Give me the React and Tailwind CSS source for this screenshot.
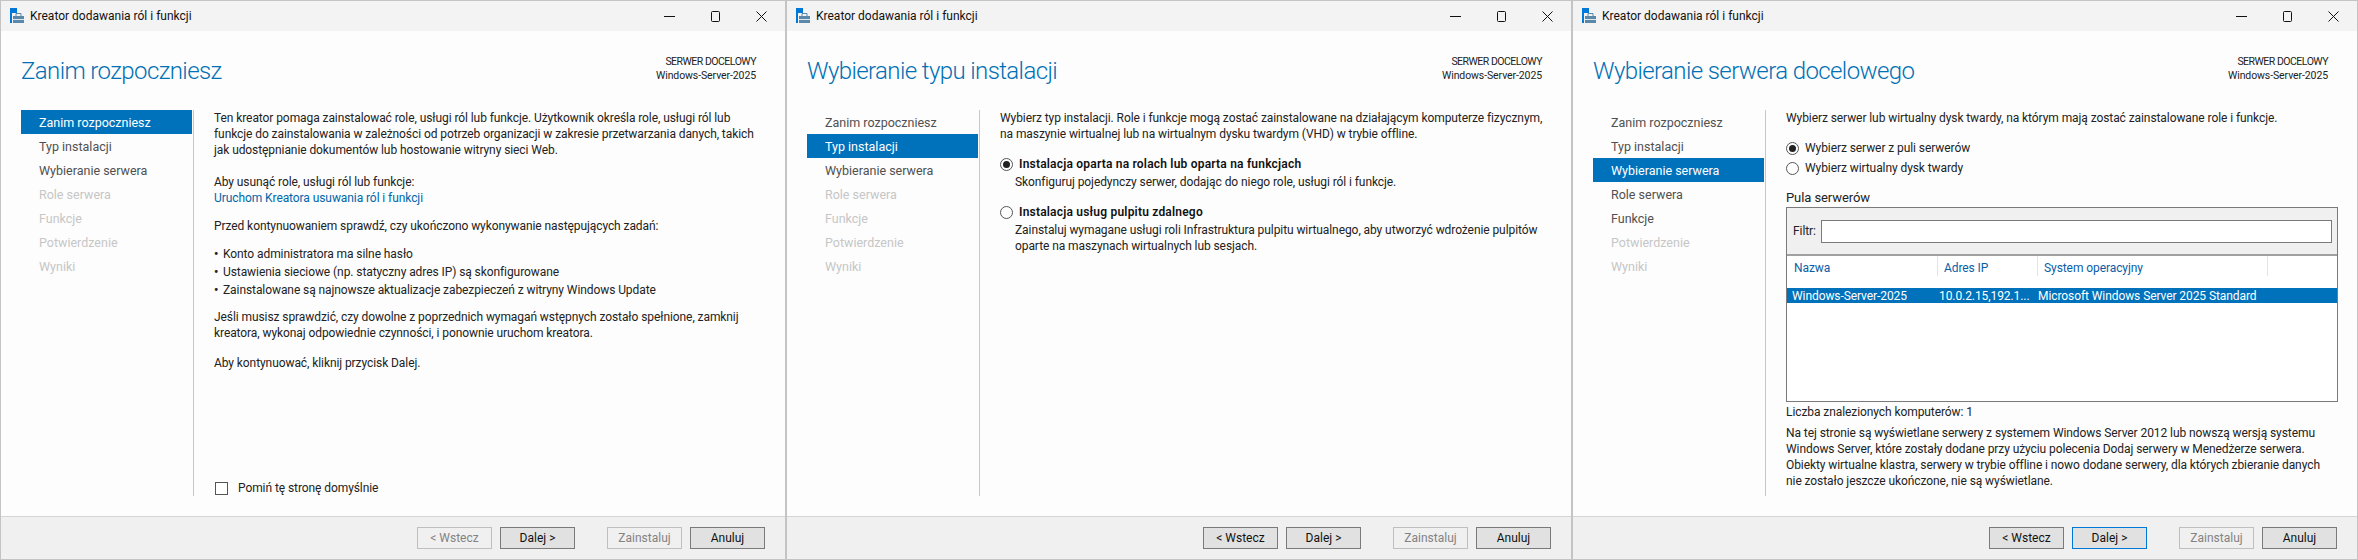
const navItems = ["Zanim rozpoczniesz", "Typ instalacji", "Wybieranie serwera", "Role serwera", "Funkcje", "Potwierdzenie", "Wyniki"]

const font = { fontFamily: "Roboto, 'Noto Sans', sans-serif" }

const AppIcon = () => (
  <svg width="15" height="16" viewBox="0 0 15 16" className="shrink-0">
    <rect x="0" y="0" width="7" height="5" fill="#0078d7" />
    <rect x="0" y="5" width="2" height="10" fill="#0078d7" />
    <path d="M6 8V5.5h5V8" fill="none" stroke="#5b87a8" strokeWidth="1" />
    <rect x="3" y="8" width="11" height="7" fill="#5b87a8" />
    <rect x="3" y="11" width="11" height="1" fill="#dce6ee" />
  </svg>
)

const WindowButtons = () => (
  <div className="flex items-center gap-[35px] mr-[18px]">
    <svg width="11" height="11" viewBox="0 0 11 11"><path d="M0 5.5h11" stroke="#111" /></svg>
    <svg width="11" height="11" viewBox="0 0 11 11"><rect x="1.5" y="0.5" width="8" height="10" rx="1" fill="none" stroke="#111" /></svg>
    <svg width="11" height="11" viewBox="0 0 11 11"><path d="M0.5 0.5l10 10M10.5 0.5l-10 10" stroke="#111" /></svg>
  </div>
)

const Radio = ({ checked }) => (
  <span className="w-[13px] h-[13px] rounded-full border border-[#555] bg-white flex items-center justify-center shrink-0">
    {checked && <span className="w-[7px] h-[7px] rounded-full bg-[#222]" />}
  </span>
)

const Btn = ({ children, disabled, focus }) => (
  <button
    className={`w-[75px] h-[22px] border text-[12px] leading-none ${
      disabled
        ? "bg-[#f0f0f0] border-[#bfbfbf] text-[#838383]"
        : focus
        ? "bg-[#e1e1e1] border-[#0078d7] text-[#111]"
        : "bg-[#e1e1e1] border-[#7a7a7a] text-[#111]"
    }`}
  >
    {children}
  </button>
)

const Wizard = ({ title, active, enabled, backOn, nextFocus, children }) => (
  <div className="w-[786px] h-[560px] shrink-0 flex flex-col border border-[#c4c4c4] bg-[#fdfdfd]" style={font}>
    <div className="h-[30px] bg-[#f3f3f3] flex items-center justify-between pl-[9px] shrink-0">
      <div className="flex items-center gap-[5px] text-[12px] text-[#111]">
        <AppIcon />
        <span>Kreator dodawania ról i funkcji</span>
      </div>
      <WindowButtons />
    </div>

    <div className="h-[79px] flex justify-between pl-[20px] pr-[29px] shrink-0">
      <h1 className="text-[24px] leading-[34px] font-light tracking-[-0.6px] text-[#0070b5] mt-[23px]">{title}</h1>
      <div className="text-right text-[10.5px] leading-[14px] text-[#222] mt-[24px]">
        <div className="tracking-[-0.5px]">SERWER DOCELOWY</div>
        <div className="tracking-[-0.1px]">Windows-Server-2025</div>
      </div>
    </div>

    <div className="h-[386px] flex text-[12px] leading-[16px] text-[#222] shrink-0">
      <div className="ml-[20px] w-[173px] border-r border-[#c8c8c8] shrink-0">
        {navItems.map((item, i) => (
          <div
            key={item}
            className={`w-[171px] h-[24px] pl-[18px] pt-[1px] text-[12.5px] flex items-center ${
              i === active ? "bg-[#0072bc] text-white" : i < enabled ? "text-[#505050]" : "text-[#c6c6c6]"
            }`}
          >
            {item}
          </div>
        ))}
      </div>
      <div className="flex-1 pl-[20px] pr-[19px] tracking-[-0.08px] relative">{children}</div>
    </div>

    <div className="flex-1" />

    <div className="h-[43px] bg-[#f0f0f0] border-t border-[#d5d5d5] flex items-center justify-end pr-[20px] shrink-0">
      <div className="flex gap-[8px]">
        <Btn disabled={!backOn}>&lt; Wstecz</Btn>
        <Btn focus={nextFocus}>Dalej &gt;</Btn>
      </div>
      <div className="flex gap-[8px] ml-[32px]">
        <Btn disabled>Zainstaluj</Btn>
        <Btn>Anuluj</Btn>
      </div>
    </div>
  </div>
)

const BeforeYouBegin = () => (
  <div className="flex flex-col h-full">
    <p>
      Ten kreator pomaga zainstalować role, usługi ról lub funkcje. Użytkownik określa role, usługi ról lub<br />
      funkcje do zainstalowania w zależności od potrzeb organizacji w zakresie przetwarzania danych, takich<br />
      jak udostępnianie dokumentów lub hostowanie witryny sieci Web.
    </p>
    <p className="mt-[16px]">Aby usunąć role, usługi ról lub funkcje:</p>
    <p className="text-[#0066a8]">Uruchom Kreatora usuwania ról i funkcji</p>
    <p className="mt-[12px]">Przed kontynuowaniem sprawdź, czy ukończono wykonywanie następujących zadań:</p>
    <ul className="mt-[12px] flex flex-col gap-[2px]">
      {[
        "Konto administratora ma silne hasło",
        "Ustawienia sieciowe (np. statyczny adres IP) są skonfigurowane",
        "Zainstalowane są najnowsze aktualizacje zabezpieczeń z witryny Windows Update",
      ].map(t => (
        <li key={t} className="flex">
          <span className="w-[9px] font-bold">•</span>
          {t}
        </li>
      ))}
    </ul>
    <p className="mt-[11px]">
      Jeśli musisz sprawdzić, czy dowolne z poprzednich wymagań wstępnych zostało spełnione, zamknij<br />
      kreatora, wykonaj odpowiednie czynności, i ponownie uruchom kreatora.
    </p>
    <p className="mt-[14px]">Aby kontynuować, kliknij przycisk Dalej.</p>
    <label className="mt-auto flex items-center gap-[10px] pl-[1px]">
      <span className="w-[13px] h-[13px] border border-[#555] bg-white" />
      Pomiń tę stronę domyślnie
    </label>
  </div>
)

const InstallType = () => (
  <div>
    <p>
      Wybierz typ instalacji. Role i funkcje mogą zostać zainstalowane na działającym komputerze fizycznym,<br />
      na maszynie wirtualnej lub na wirtualnym dysku twardym (VHD) w trybie offline.
    </p>
    <div className="mt-[14px] flex items-center gap-[6px]">
      <Radio checked />
      <b className="font-semibold tracking-[0.2px] text-[#111]">Instalacja oparta na rolach lub oparta na funkcjach</b>
    </div>
    <p className="ml-[15px] mt-[2px]">Skonfiguruj pojedynczy serwer, dodając do niego role, usługi ról i funkcje.</p>
    <div className="mt-[14px] flex items-center gap-[6px]">
      <Radio />
      <b className="font-semibold tracking-[0.2px] text-[#111]">Instalacja usług pulpitu zdalnego</b>
    </div>
    <p className="ml-[15px] mt-[2px]">
      Zainstaluj wymagane usługi roli Infrastruktura pulpitu wirtualnego, aby utworzyć wdrożenie pulpitów<br />
      oparte na maszynach wirtualnych lub sesjach.
    </p>
  </div>
)

const ServerSelect = () => (
  <div>
    <p>Wybierz serwer lub wirtualny dysk twardy, na którym mają zostać zainstalowane role i funkcje.</p>
    <div className="mt-[14px] flex flex-col gap-[4px]">
      <div className="flex items-center gap-[6px]"><Radio checked />Wybierz serwer z puli serwerów</div>
      <div className="flex items-center gap-[6px]"><Radio />Wybierz wirtualny dysk twardy</div>
    </div>
    <div className="mt-[13px] text-[13px] leading-[17px]">Pula serwerów</div>
    <div className="mt-[1px] h-[195px] border border-[#7a7a7a] bg-white flex flex-col">
      <div className="h-[48px] bg-[#f0f0f0] border-b-2 border-[#a0a0a0] flex items-center pl-[6px] pr-[5px] gap-[5px] shrink-0">
        <span>Filtr:</span>
        <div className="flex-1 h-[23px] bg-white border border-[#7a7a7a]" />
      </div>
      <div className="h-[32px] flex text-[#0a5ea8] shrink-0">
        <div className="w-[151px] h-[20px] pt-[4px] pl-[7px] border-r border-[#e4e4e4]">Nazwa</div>
        <div className="w-[100px] h-[20px] pt-[4px] pl-[6px] border-r border-[#e4e4e4]">Adres IP</div>
        <div className="w-[230px] h-[20px] pt-[4px] pl-[6px] border-r border-[#e4e4e4]">System operacyjny</div>
      </div>
      <div className="h-[15px] bg-[#0072bc] text-white flex items-center">
        <span className="w-[151px] pl-[5px]">Windows-Server-2025</span>
        <span className="w-[100px] pl-[1px]">10.0.2.15,192.1...</span>
        <span>Microsoft Windows Server 2025 Standard</span>
      </div>
    </div>
    <p className="mt-[2px]">Liczba znalezionych komputerów: 1</p>
    <p className="mt-[5px]">
      Na tej stronie są wyświetlane serwery z systemem Windows Server 2012 lub nowszą wersją systemu<br />
      Windows Server, które zostały dodane przy użyciu polecenia Dodaj serwery w Menedżerze serwera.<br />
      Obiekty wirtualne klastra, serwery w trybie offline i nowo dodane serwery, dla których zbieranie danych<br />
      nie zostało jeszcze ukończone, nie są wyświetlane.
    </p>
  </div>
)

export default function App() {
  return (
    <div className="flex w-[2358px] h-[560px] overflow-hidden">
      <Wizard title="Zanim rozpoczniesz" active={0} enabled={3}>
        <BeforeYouBegin />
      </Wizard>
      <Wizard title="Wybieranie typu instalacji" active={1} enabled={3} backOn>
        <InstallType />
      </Wizard>
      <Wizard title="Wybieranie serwera docelowego" active={2} enabled={5} backOn nextFocus>
        <ServerSelect />
      </Wizard>
    </div>
  )
}
